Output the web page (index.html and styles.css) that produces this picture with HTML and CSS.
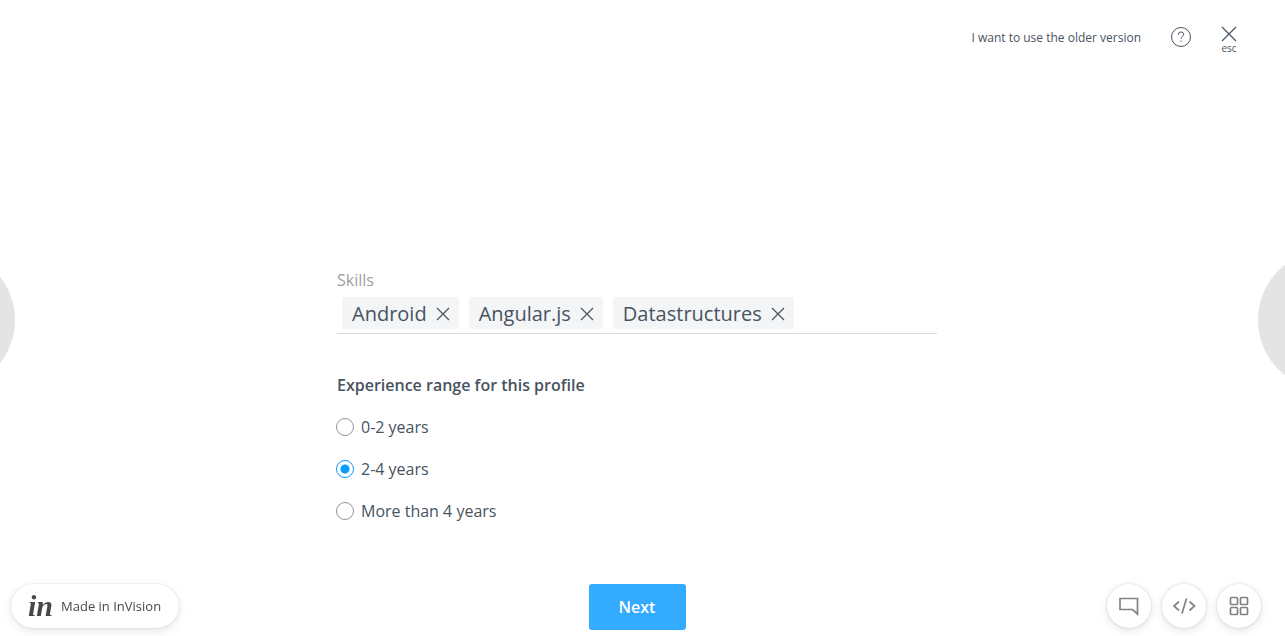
FILE: index.html
```html
<!DOCTYPE html>
<html lang="en">
<head>
<meta charset="utf-8">
<meta name="viewport" content="width=device-width, initial-scale=1">
<title>Skills and experience</title>
<link rel="stylesheet" href="styles.css">
</head>
<body>
<div class="page">
  <header class="topbar">
    <a class="older-link" href="#older">I want to use the older version</a>
    <button class="help" type="button" aria-label="Help">
      <svg width="22" height="22" viewBox="0 0 22 22"><circle cx="11" cy="11" r="9.5"/><path d="M8.3 9V8.600a2.700 2.700 0 0 1 5.400 0c0 1.900-2.700 2-2.700 4.200M11 14.600v1.300"/></svg>
    </button>
    <button class="close" type="button">
      <svg width="16" height="16" viewBox="0 0 16 16" aria-hidden="true"><path d="M1 1l14 14M15 1L1 15"/></svg>
      <span class="close-key">esc</span>
    </button>
  </header>

  <main class="content">
    <form class="form" id="profile">
      <div class="label" id="skills-label">Skills</div>
      <ul class="chips" aria-labelledby="skills-label">
        <li class="chip">Android<button class="chip-remove" type="button" aria-label="Remove Android"><svg width="14" height="14" viewBox="0 0 14 14"><path d="M1 1l12 12M13 1L1 13"/></svg></button></li>
        <li class="chip">Angular.js<button class="chip-remove" type="button" aria-label="Remove Angular.js"><svg width="14" height="14" viewBox="0 0 14 14"><path d="M1 1l12 12M13 1L1 13"/></svg></button></li>
        <li class="chip">Datastructures<button class="chip-remove" type="button" aria-label="Remove Datastructures"><svg width="14" height="14" viewBox="0 0 14 14"><path d="M1 1l12 12M13 1L1 13"/></svg></button></li>
      </ul>
      <fieldset class="experience">
        <legend class="legend">Experience range for this profile</legend>
        <label class="option"><input class="radio" type="radio" name="experience">0-2 years</label>
        <label class="option"><input class="radio" type="radio" name="experience" checked>2-4 years</label>
        <label class="option"><input class="radio" type="radio" name="experience">More than 4 years</label>
      </fieldset>
    </form>
  </main>

  <footer class="actions">
    <button class="next" type="submit" form="profile">Next</button>
  </footer>
</div>

<div class="edges" aria-hidden="true">
  <span class="edge edge-left"></span>
  <span class="edge edge-right"></span>
</div>

<a class="badge" href="#invision"><span class="badge-logo" aria-hidden="true">in</span><span>Made in InVision</span></a>

<nav class="tools" aria-label="Prototype tools">
  <button class="tool" type="button" aria-label="Comments"><svg width="24" height="24" viewBox="0 0 24 24"><path d="M3 4.500h17.500v15.500l-5-4.500H3z"/></svg></button>
  <button class="tool" type="button" aria-label="Inspect"><svg width="24" height="24" viewBox="0 0 24 24"><path d="M7 7.500L2 12l5 4.500M17.500 7.500l5 4.500-5 4.500M14.500 4.500L10 19.500"/></svg></button>
  <button class="tool" type="button" aria-label="Screens"><svg width="24" height="24" viewBox="0 0 24 24"><rect x="3.500" y="3.500" width="7" height="7" rx="1"/><rect x="13.500" y="3.500" width="7" height="7" rx="1"/><rect x="3.500" y="13.500" width="7" height="7" rx="1"/><rect x="13.500" y="13.500" width="7" height="7" rx="1"/></svg></button>
</nav>
</body>
</html>
```
FILE: styles.css
```css
* {
  box-sizing: border-box;
}

body {
  margin: 0;
  background: #fff;
  color: #48535f;
  font-family: "Open Sans", "Noto Sans", sans-serif;
  font-size: 16px;
  line-height: 24px;
}

button {
  padding: 0;
  border: 0;
  background: none;
  color: inherit;
  font: inherit;
  cursor: pointer;
}

svg {
  display: block;
  fill: none;
  stroke: currentColor;
}

.page {
  display: flex;
  flex-direction: column;
  min-height: 100vh;
  padding-right: 11px;
}

.topbar {
  display: flex;
  justify-content: flex-end;
  align-items: flex-start;
  padding: 26px 37px 0 24px;
}

.older-link {
  margin-right: 29px;
  color: inherit;
  font-size: 12px;
  text-decoration: none;
}

.help {
  margin-right: 29px;
}

.close {
  display: flex;
  flex-direction: column;
  align-items: center;
}

.close svg,
.chip-remove svg {
  stroke-width: 1.2;
}

.close-key {
  font-size: 10px;
  line-height: 12px;
}

.content {
  display: flex;
  flex: 1;
  flex-direction: column;
  justify-content: flex-end;
  padding: 24px 24px 61px;
}

.form {
  width: 100%;
  max-width: 600px;
  margin: 0 auto;
}

.label {
  padding-bottom: 5px;
  color: #9a9fa5;
}

.chips {
  display: flex;
  flex-wrap: wrap;
  gap: 10px;
  margin: 0;
  padding: 0 5px 4px;
  border-bottom: 1px solid #d8dce0;
  list-style: none;
}

.chip {
  display: flex;
  align-items: center;
  gap: 9px;
  height: 32px;
  padding: 2px 9px 0 10px;
  border-radius: 2px;
  background: #f4f5f7;
  font-size: 20px;
}

.experience {
  min-width: 0;
  margin: 39px 0 0;
  padding: 0;
  border: 0;
}

.legend {
  padding: 0;
  font-weight: 600;
}

.option {
  display: flex;
  align-items: center;
  gap: 7px;
  margin-top: 18px;
}

.radio {
  width: 18px;
  height: 18px;
  margin: 0 0 0 -1px;
  border: 1px solid #8f959c;
  border-radius: 50%;
  appearance: none;
}

.radio:checked {
  border-color: #0a9bff;
  background: radial-gradient(circle, #0a9bff 4px, transparent 5px);
}

.actions {
  display: flex;
  justify-content: center;
  padding-bottom: 6px;
}

.next {
  min-width: 97px;
  height: 46px;
  padding: 0 24px;
  border-radius: 3px;
  background: #33acff;
  color: #fff;
  font-weight: 600;
}

.edges {
  position: fixed;
  inset: 0;
  overflow: hidden;
  pointer-events: none;
}

.edge {
  position: absolute;
  top: 50%;
  width: 140px;
  height: 140px;
  margin-top: -68px;
  border-radius: 50%;
  background: #e4e4e4;
}

.edge-left {
  left: -125px;
}

.edge-right {
  right: -113px;
}

.badge {
  position: fixed;
  bottom: 8px;
  left: 11px;
  display: flex;
  align-items: center;
  gap: 8px;
  height: 44px;
  padding: 0 18px 0 17px;
  border-radius: 22px;
  background: #fff;
  box-shadow: 0 0 2px rgba(0, 0, 0, 0.16), 0 3px 10px rgba(0, 0, 0, 0.1);
  color: #484848;
  font-size: 13px;
  text-decoration: none;
}

.badge-logo {
  font-family: "Liberation Serif", serif;
  font-size: 30px;
  font-style: italic;
  font-weight: 700;
}

.tools {
  position: fixed;
  right: 24px;
  bottom: 8px;
  display: flex;
  gap: 11px;
}

.tool {
  display: grid;
  place-items: center;
  width: 44px;
  height: 44px;
  border-radius: 50%;
  background: #fff;
  box-shadow: 0 0 3px rgba(0, 0, 0, 0.16), 0 3px 10px rgba(0, 0, 0, 0.1);
  color: #828282;
}

.tool svg {
  stroke-width: 1.7;
}
```
